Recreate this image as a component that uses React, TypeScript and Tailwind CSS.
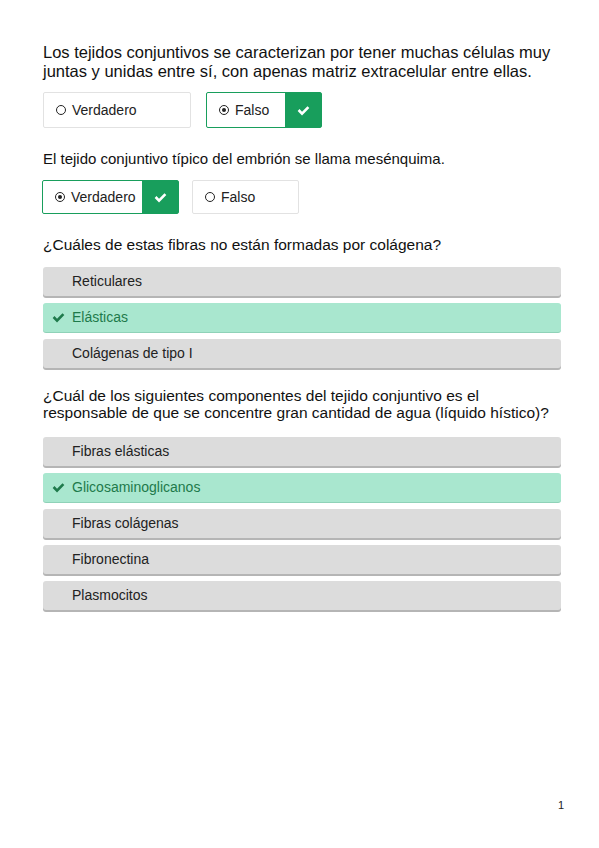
import React from 'react';

const Check: React.FC<{ className?: string }> = ({ className }) => (
  <svg viewBox="0 0 16 16" className={className} fill="currentColor">
    <path d="M0.8 8.6l2.3-2.3 3.1 3.1 6.7-6.7 2.3 2.3-9 9z" />
  </svg>
);

const Radio: React.FC<{ checked?: boolean }> = ({ checked }) => (
  <span className="inline-flex items-center justify-center w-[10px] h-[10px] rounded-full border-[1.5px] border-[#222] mr-[6px]">
    {checked && <span className="w-[4px] h-[4px] rounded-full bg-[#222]" />}
  </span>
);

const TFButton: React.FC<{ label: string; checked?: boolean; size: string }> = ({ label, checked, size }) => (
  <div
    className={`flex items-stretch rounded-[2px] border ${
      checked ? 'border-[#189e5c]' : 'border-[#e2e2e2]'
    } ${size}`}
  >
    <div className="flex-1 flex items-center pl-[12px] text-[14px] text-[#222]">
      <Radio checked={checked} />
      {label}
    </div>
    {checked && (
      <div className="w-[36px] bg-[#189e5c] flex items-center justify-center">
        <Check className="w-[13px] h-[13px] text-white" />
      </div>
    )}
  </div>
);

const Option: React.FC<{ label: string; correct?: boolean }> = ({ label, correct }) => (
  <div
    className={`h-[29px] rounded-[3px] flex items-center text-[14px] ${
      correct
        ? 'bg-[#a9e7cf] text-[#1e7a4b] shadow-[0_1px_0_#8fd2b8]'
        : 'bg-[#dcdcdc] text-[#222] shadow-[0_2px_0_#b5b5b5]'
    }`}
  >
    <span className="w-[29px] flex justify-center pl-[2px]">
      {correct && <Check className="w-[13px] h-[13px] text-[#1e7a4b]" />}
    </span>
    {label}
  </div>
);

export default function App() {
  return (
    <div
      className="relative w-[599px] h-[848px] bg-white pl-[43px] pr-[38px] pt-[43px]"
      style={{ fontFamily: '"Liberation Sans", Arial, sans-serif' }}
    >
      <p className="text-[16.5px] leading-[19px] text-[#111] pr-[5px]">
        Los tejidos conjuntivos se caracterizan por tener muchas células muy juntas y unidas entre sí, con apenas matriz extracelular entre ellas.
      </p>
      <div className="flex gap-[15px] mt-[11px]">
        <TFButton label="Verdadero" size="w-[148px] h-[36px]" />
        <TFButton label="Falso" checked size="w-[116px] h-[36px]" />
      </div>

      <p className="text-[15px] leading-[19px] text-[#111] mt-[21px]">
        El tejido conjuntivo típico del embrión se llama mesénquima.
      </p>
      <div className="flex gap-[13px] mt-[12px] -ml-[1px]">
        <TFButton label="Verdadero" checked size="w-[137px] h-[34px]" />
        <TFButton label="Falso" size="w-[107px] h-[34px]" />
      </div>

      <p className="text-[15.5px] leading-[19px] text-[#111] mt-[21px]">
        ¿Cuáles de estas fibras no están formadas por colágena?
      </p>
      <div className="flex flex-col gap-[7px] mt-[13px]">
        <Option label="Reticulares" />
        <Option label="Elásticas" correct />
        <Option label="Colágenas de tipo I" />
      </div>

      <p className="text-[15.5px] leading-[17px] text-[#111] mt-[19px] pr-[5px]">
        ¿Cuál de los siguientes componentes del tejido conjuntivo es el responsable de que se concentre gran cantidad de agua (líquido hístico)?
      </p>
      <div className="flex flex-col gap-[7px] mt-[16px]">
        <Option label="Fibras elásticas" />
        <Option label="Glicosaminoglicanos" correct />
        <Option label="Fibras colágenas" />
        <Option label="Fibronectina" />
        <Option label="Plasmocitos" />
      </div>

      <div className="absolute right-[35px] top-[797px] text-[11px] text-[#222]">1</div>
    </div>
  );
}
